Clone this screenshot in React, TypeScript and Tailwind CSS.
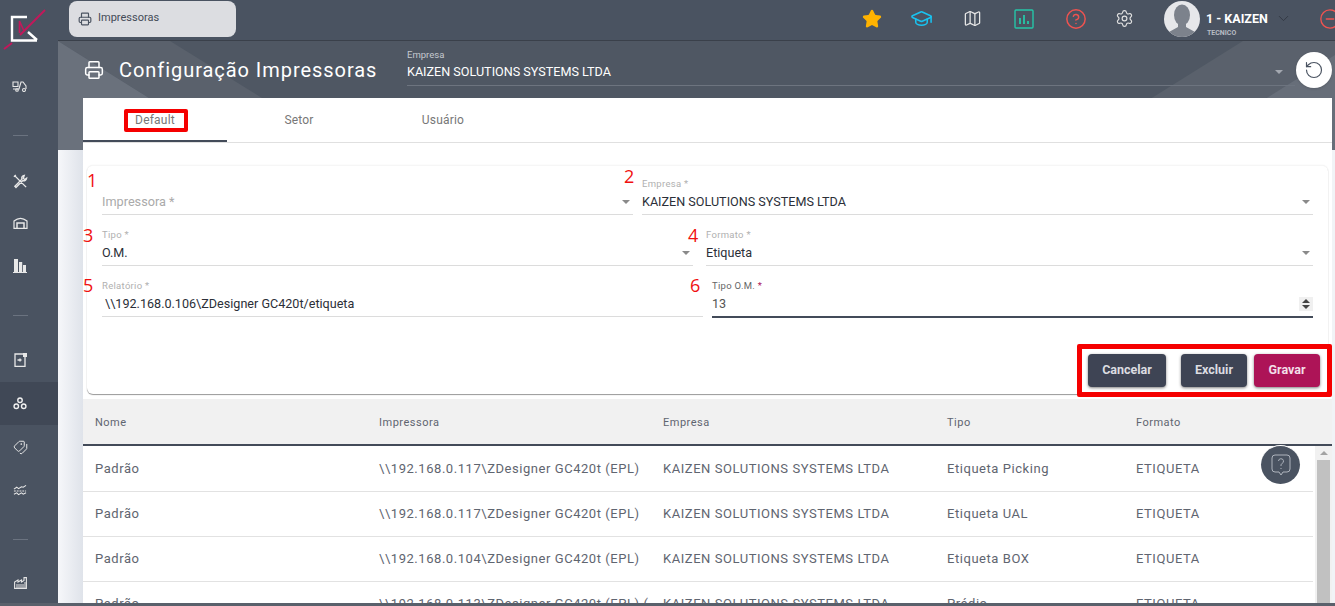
import { ChevronDown, CircleMinus, CircleHelp, GraduationCap, Map as MapIcon, Printer, RotateCcw, Settings, Star, Tags } from "lucide-react";

const rows = [
  ["Padrão", "\\\\192.168.0.117\\ZDesigner GC420t (EPL)", "KAIZEN SOLUTIONS SYSTEMS LTDA", "Etiqueta Picking", "ETIQUETA"],
  ["Padrão", "\\\\192.168.0.117\\ZDesigner GC420t (EPL)", "KAIZEN SOLUTIONS SYSTEMS LTDA", "Etiqueta UAL", "ETIQUETA"],
  ["Padrão", "\\\\192.168.0.104\\ZDesigner GC420t (EPL)", "KAIZEN SOLUTIONS SYSTEMS LTDA", "Etiqueta BOX", "ETIQUETA"],
  ["Padrão", "\\\\192.168.0.113\\ZDesigner GC420t (EPL) (", "KAIZEN SOLUTIONS SYSTEMS LTDA", "Prédio", "ETIQUETA"],
];

const Caret = () => (
  <span className="w-0 h-0 border-x-[4.5px] border-x-transparent border-t-[4.5px] border-t-[#8a8a8a]" />
);

const Num = ({ n, className }: { n: number; className: string }) => (
  <span className={"absolute text-[18px] leading-5 text-[#f01010] font-['Open_Sans',sans-serif] " + className}>{n}</span>
);

const Field = ({
  label,
  value,
  className,
  placeholder,
}: {
  label?: string;
  value?: string;
  className: string;
  placeholder?: string;
}) => (
  <div className={"flex flex-col justify-end border-b border-[#dcdcdc] " + className}>
    <span className="text-[9.5px] leading-3 text-[#b0b0b0] tracking-[0.3px] h-3">{label}</span>
    <div className="h-[26px] -mt-[2px] pt-[2px] flex items-center justify-between pr-[3px]">
      <span className={placeholder ? "text-[12.7px] text-[#aaaaaa]" : "text-[12.6px] text-[#2b2f38]"}>{placeholder ?? value}</span>
      <Caret />
    </div>
  </div>
);

function Logo() {
  return (
    <svg width="48" height="44" viewBox="0 8 48 44" fill="none">
      <path d="M37 40.5 H12 V17 H27 M28 32 L37 40" stroke="#fff" strokeWidth="2.4" />
      <path d="M19.5 33 V21 L24 31" stroke="#c2185b" strokeWidth="1.6" />
      <path d="M45 10 L20 35" stroke="#c2185b" strokeWidth="2" />
      <path d="M4 49 L12 43" stroke="#c2185b" strokeWidth="2" />
    </svg>
  );
}

function ForkliftIcon() {
  return (
    <svg width="16" height="11" viewBox="0 0 16 11" fill="none" stroke="#e8e8e8" strokeWidth="1.1">
      <path d="M1 1 H6 V5.5 H1 Z M1 8 H7 L9 1 H11 L14 5 V8" />
      <circle cx="5" cy="9" r="1.3" />
      <circle cx="12" cy="9" r="1.5" />
    </svg>
  );
}

function Tools() {
  return (
    <svg width="15" height="15" viewBox="0 0 16 16" fill="none" stroke="#e8e8e8" strokeWidth="1.5">
      <path d="M2 2 L14 14 M3 1 L1 3 M12 1.5 a3 3 0 0 0 -2.5 4 L2 13 l1.2 1.4 L10.5 7 a3 3 0 0 0 4 -2.5 L12.5 6 L11 4.5 Z" />
    </svg>
  );
}

function WarehouseIcon() {
  return (
    <svg width="15" height="12" viewBox="0 0 15 12" fill="none" stroke="#e8e8e8" strokeWidth="1.2">
      <path d="M1 11.4 V4 Q7.5 -1.4 14 4 V11.4 Z" />
      <path d="M4 11 V6 H11 V11" strokeWidth="1.5" />
    </svg>
  );
}

function Bars() {
  return (
    <svg width="14" height="14" viewBox="0 0 14 14" fill="#e8e8e8">
      <rect x="1" y="0" width="4" height="13" />
      <rect x="6" y="3" width="3.2" height="10" />
      <rect x="10" y="6" width="3" height="7" />
      <rect x="0" y="13" width="14" height="1" />
    </svg>
  );
}

function DoorIn() {
  return (
    <svg width="13" height="14" viewBox="0 0 13 14" fill="none" stroke="#e8e8e8" strokeWidth="1.3">
      <path d="M9 1 H1 V13.4 H11 V4" />
      <rect x="9" y="0" width="4" height="4" fill="#e8e8e8" stroke="none" />
      <path d="M3.5 7 H7.5 M6 5.5 V8.5" />
    </svg>
  );
}

function Rings() {
  return (
    <svg width="14" height="13" viewBox="0 0 15 14" fill="none" stroke="#f0f0f0" strokeWidth="1.5">
      <circle cx="7.5" cy="3.5" r="2.4" />
      <circle cx="3.5" cy="10" r="2.4" />
      <circle cx="11.5" cy="10" r="2.4" />
    </svg>
  );
}

function Waves() {
  return (
    <svg width="14" height="12" viewBox="0 0 15 12" fill="none" stroke="#e8e8e8" strokeWidth="1.1">
      <path d="M1 5 L4 3 L6 4.5 L9 2.5 L11 3 L14 1" />
      <path d="M1 7 H14" strokeDasharray="2 1" />
      <path d="M1 10.5 L4 9 L6 11 L9 9 L11 10.5 L14 9" />
    </svg>
  );
}

function FactoryIcon() {
  return (
    <svg width="13" height="12" viewBox="0 0 13 12" fill="none" stroke="#e4e4e4" strokeWidth="1.1">
      <path d="M0.6 11.4 V5 L4 3 V5 L7.5 3 V5 L10 3.5 V0.6 H12.4 V11.4 Z" />
      <path d="M3 11 V7 M5 11 V7 M7 11 V7 M9 11 V7 M11 11 V5" strokeWidth="1" />
    </svg>
  );
}

function Avatar() {
  return (
    <div className="w-9 h-9 rounded-full bg-[#e6e7ea] overflow-hidden shrink-0">
      <svg width="36" height="36" viewBox="0 0 36 36" fill="#7c828c">
        <ellipse cx="18" cy="14" rx="8" ry="10.5" />
        <path d="M14 22 h8 v4 l9 5 v5 H5 v-5 l9 -5 Z" />
      </svg>
    </div>
  );
}

function ChartBox() {
  return (
    <svg width="20" height="20" viewBox="0 0 20 20" fill="none" stroke="#26c6a8" strokeWidth="1.4" className="block">
      <rect x="1" y="1" width="18" height="18" rx="1" />
      <path d="M6 15 V9 M10 15 V6 M14 15 V12" strokeWidth="1.8" />
    </svg>
  );
}

function HelpBubble() {
  return (
    <svg width="22" height="24" viewBox="0 0 22 24" fill="none" stroke="#aeb4bd" strokeWidth="1">
      <path d="M5 2 H17 a3 3 0 0 1 3 3 V16 a3 3 0 0 1 -3 3 H13 L11 22 L9 19 H5 a3 3 0 0 1 -3 -3 V5 a3 3 0 0 1 3 -3 Z" />
      <path d="M8.5 8 a2.5 2.5 0 1 1 3.5 2.5 c-0.8 0.5 -1 1 -1 2.5 M11 15 v1" />
    </svg>
  );
}

const SideItem = ({ children, active, className }: { children: React.ReactNode; active?: boolean; className: string }) => (
  <div className={"flex items-center " + (active ? "bg-[#404856] " : "") + className}>
    <span className="w-10 flex justify-center">{children}</span>
  </div>
);

const SideRule = ({ className }: { className: string }) => (
  <div className={"w-[15px] h-px bg-[#6b7380] ml-[13px] " + className} />
);

export default function App() {
  return (
    <div className="relative flex w-[1335px] h-[606px] overflow-hidden bg-[#f1f3f6] font-['Roboto',sans-serif]">
      <aside className="w-[58px] shrink-0 bg-[#4a5361] flex flex-col pt-[8px]">
        <div className="h-[44px]">
          <Logo />
        </div>
        <SideItem className="h-6 mt-[22px]"><ForkliftIcon /></SideItem>
        <SideRule className="mt-[37px]" />
        <SideItem className="h-6 mt-[33px]"><Tools /></SideItem>
        <SideItem className="h-6 mt-[18px]"><WarehouseIcon /></SideItem>
        <SideItem className="h-6 mt-[19px]"><Bars /></SideItem>
        <SideRule className="mt-[37px]" />
        <SideItem className="h-6 mt-[32px]"><DoorIn /></SideItem>
        <SideItem active className="h-[43px] mt-[10px]"><Rings /></SideItem>
        <SideItem className="h-6 mt-[10px]"><Tags size={15} color="#e8e8e8" strokeWidth={1.6} className="-scale-x-100" /></SideItem>
        <SideItem className="h-6 mt-[19px]"><Waves /></SideItem>
        <SideRule className="mt-[37px]" />
        <SideItem className="h-6 mt-[31px]"><FactoryIcon /></SideItem>
      </aside>

      <div className="flex-1 min-w-0 flex flex-col">
        <header className="h-[41px] shrink-0 bg-[#4a5361] border-b border-[#3a404a] flex items-center pl-[11px] relative z-10">
          <div className="w-[167px] h-[36px] shrink-0 -mt-[3px] rounded-lg bg-[#dcdde1] flex items-center pl-[9px] gap-[6px]">
            <Printer size={14} color="#4a5361" />
            <span className="text-[11px] text-[#444b57]">Impressoras</span>
          </div>
          <div className="flex items-center ml-[626px] -mt-[3px]">
            <Star size={20} color="#ffb300" fill="#ffb300" className="shrink-0" />
            <GraduationCap size={23} color="#19c3f0" strokeWidth={1.6} className="ml-[28px] shrink-0" />
            <MapIcon size={19} color="#e6e6e6" strokeWidth={1.6} className="ml-[30px] shrink-0" />
            <span className="ml-[32px] shrink-0"><ChartBox /></span>
            <CircleHelp size={22} color="#ef5350" strokeWidth={1.6} className="ml-[31px] shrink-0" />
            <Settings size={19} color="#e0e0e0" strokeWidth={1.5} className="ml-[28px] shrink-0" />
            <span className="ml-[30px] shrink-0"><Avatar /></span>
            <div className="ml-[6px] w-[70px] shrink-0 flex flex-col">
              <span className="text-[12.5px] leading-4 font-bold text-white whitespace-nowrap mt-[12px]">1 - KAIZEN</span>
              <span className="text-[7px] leading-[9px] font-bold text-[#b7bcc4] mt-[2px] ml-[1px]">TECNICO</span>
            </div>
            <ChevronDown size={17} color="#2f3540" strokeWidth={1.2} className="-ml-[1px] shrink-0" />
            <CircleMinus size={22} color="#ef5350" strokeWidth={1.5} className="ml-[27px] shrink-0" />
          </div>
        </header>

        <main className="relative flex-1 min-h-0 pl-[25px] pr-[3px] flex flex-col bg-[linear-gradient(to_right,#f6f7fa_0,#dfe3ea_25px,#f1f3f6_25px)]">
          <div className="absolute inset-x-0 top-0 h-[109px] bg-[#4f5763] overflow-hidden">
            <svg width="1277" height="109" className="block">
              <path d="M112 0 L288 109 L174 109 L0 0 Z" fill="#5a616c" />
              <path d="M0 0 L174 109 L0 109 Z" fill="#6a717c" />
              <path d="M1009 110 L1185 0 L1277 0 L1277 110 Z" fill="#5a616c" />
              <path d="M1125 110 L1277 14 L1277 110 Z" fill="#676e79" />
            </svg>
          </div>

          <div className="relative h-[57px] shrink-0 flex items-center">
            <Printer size={20} color="#ffffff" strokeWidth={1.8} className="ml-[1px]" />
            <h1 className="ml-[15px] w-[288px] text-[20px] text-white tracking-[0.95px] whitespace-nowrap">Configuração Impressoras</h1>
            <div className="flex-1 self-start mt-[8px] h-[37px] border-b border-[#6d747f] flex flex-col mr-[37px]">
              <span className="text-[9.5px] leading-3 text-[#c5c9cf]">Empresa</span>
              <div className="flex items-center justify-between mt-[2px]">
                <span className="text-[12.6px] text-white">KAIZEN SOLUTIONS SYSTEMS LTDA</span>
                <span className="w-0 h-0 mr-[12px] border-x-[4px] border-x-transparent border-t-[4px] border-t-[#a3a8b0]" />
              </div>
            </div>
            <button className="absolute right-0 top-[11px] w-9 h-9 rounded-full bg-white shadow flex items-center justify-center">
              <RotateCcw size={20} color="#4a5361" strokeWidth={1.4} />
            </button>
          </div>

          <div className="relative flex-1 min-h-0 bg-white flex flex-col">
            <div className="h-[45px] shrink-0 flex border-b border-[#e0e0e0]">
              <div className="relative w-[144px] h-[44px] border-b-[2px] border-[#434b59] text-center pt-[13px] text-[12px] text-[#777] tracking-[0.2px]">
                Default
                <span className="absolute left-[41px] top-[11px] w-[64px] h-[23px] border-[4px] border-[#f50000] rounded-[2px]" />
              </div>
              <div className="w-[144px] text-center pt-[13px] text-[12px] text-[#777] tracking-[0.2px]">Setor</div>
              <div className="w-[144px] text-center pt-[13px] text-[12px] text-[#777] tracking-[0.2px]">Usuário</div>
            </div>

            <div className="relative mx-[4px] mt-[22px] h-[229px] shrink-0 rounded-md bg-white border-t border-[#f6f6f6] shadow-[0_1px_1px_rgba(0,0,0,0.4),0_0_2px_rgba(0,0,0,0.06)] px-[15px]">
              <div className="flex gap-[9px] h-[49px]">
                <Field className="w-[531px]" placeholder="Impressora *" />
                <Field className="flex-1" label="Empresa *" value="KAIZEN SOLUTIONS SYSTEMS LTDA" />
              </div>
              <div className="flex gap-[13px] h-[51px]">
                <Field className="w-[591px]" label="Tipo *" value="O.M." />
                <Field className="flex-1" label="Formato *" value="Etiqueta" />
              </div>
              <div className="flex gap-[9px] items-start">
                <div className="w-[601px] h-[51px] flex flex-col justify-end border-b border-[#dcdcdc]">
                  <span className="text-[9.5px] leading-3 text-[#b0b0b0] tracking-[0.3px]">Relatório *</span>
                  <div className="h-[26px] -mt-[2px] pt-[2px] flex items-center pl-[3px] text-[12.6px] text-[#2b2f38]">\\192.168.0.106\ZDesigner GC420t/etiqueta</div>
                </div>
                <div className="flex-1 h-[52px] flex flex-col justify-end border-b-[2px] border-[#434b59]">
                  <span className="text-[9.5px] leading-3 text-[#666] tracking-[0.3px]">Tipo O.M. <span className="text-[#ad1457]">*</span></span>
                  <div className="h-[26px] -mt-[2px] pt-[2px] flex items-center justify-between text-[12.6px] text-[#555]">
                    13
                    <span className="w-[14px] h-[14px] bg-[#f0f0f0] flex flex-col items-center justify-center gap-[2px]">
                      <span className="w-0 h-0 border-x-[4px] border-x-transparent border-b-[4px] border-b-[#444]" />
                      <span className="w-0 h-0 border-x-[4px] border-x-transparent border-t-[4px] border-t-[#444]" />
                    </span>
                  </div>
                </div>
              </div>
              <div className="flex justify-end mt-[36px] -mr-[7px]">
                <button className="w-[78px] h-[33px] rounded bg-[#3e4454] text-[12.5px] font-bold text-[#dcdde1] shadow-[0_1px_3px_rgba(0,0,0,0.5)]">Cancelar</button>
                <button className="ml-[15px] w-[66px] h-[33px] rounded bg-[#3e4454] text-[12.5px] font-bold text-[#dcdde1] shadow-[0_1px_3px_rgba(0,0,0,0.5)]">Excluir</button>
                <button className="ml-[7px] w-[66px] h-[33px] rounded bg-[#ad1457] text-[12.5px] font-bold text-[#f3dfe8] shadow-[0_1px_3px_rgba(0,0,0,0.5)]">Gravar</button>
              </div>
              <span className="absolute left-[990px] top-[178px] w-[255px] h-[53px] border-[5px] border-[#f50000] rounded-[2px]" />
              <Num n={1} className="left-0 top-[4px]" />
              <Num n={2} className="left-[537px] top-0" />
              <Num n={3} className="-left-[4px] top-[59px]" />
              <Num n={4} className="left-[601px] top-[59px]" />
              <Num n={5} className="-left-[4px] top-[109px]" />
              <Num n={6} className="left-[603px] top-[109px]" />
            </div>

            <div className="mt-[5px] flex-1 min-h-0 relative overflow-hidden">
              <div className="h-[47px] pt-[3px] bg-[#f1f1f1] border-b-[2px] border-[#434b59] grid grid-cols-[284px_284px_284px_189px_1fr] items-center text-[11px] text-[#5f6570] tracking-[0.5px] pl-[12px]">
                <span>Nome</span>
                <span>Impressora</span>
                <span>Empresa</span>
                <span>Tipo</span>
                <span>Formato</span>
              </div>
              <div className="mr-[19px]">
                {rows.map((r, i) => (
                  <div key={i} className="h-[45px] first:h-[46px] border-b border-[#e2e2e2] grid grid-cols-[284px_284px_284px_189px_1fr] items-center text-[13px] text-[#5f6570] tracking-[0.55px] whitespace-nowrap pl-[12px]">
                    {r.map((c, j) => (
                      <span key={j}>{c}</span>
                    ))}
                  </div>
                ))}
              </div>
              <div className="absolute right-0 top-[47px] bottom-0 w-[17px] bg-[#f1f1f1] flex flex-col items-center">
                <span className="mt-[5px] w-0 h-0 border-x-[4px] border-x-transparent border-b-[4px] border-b-[#a3a3a3]" />
                <span className="mt-[5px] w-[13px] flex-1 bg-[#c1c1c1]" />
              </div>
            </div>
            <button className="absolute right-[32px] top-[347px] w-[39px] h-[39px] rounded-full bg-[#4a5361] border-t border-white flex items-center justify-center">
              <HelpBubble />
            </button>
          </div>
        </main>
      </div>
      <div className="absolute inset-x-0 bottom-0 h-[3px] bg-[#59606b]" />
    </div>
  );
}
